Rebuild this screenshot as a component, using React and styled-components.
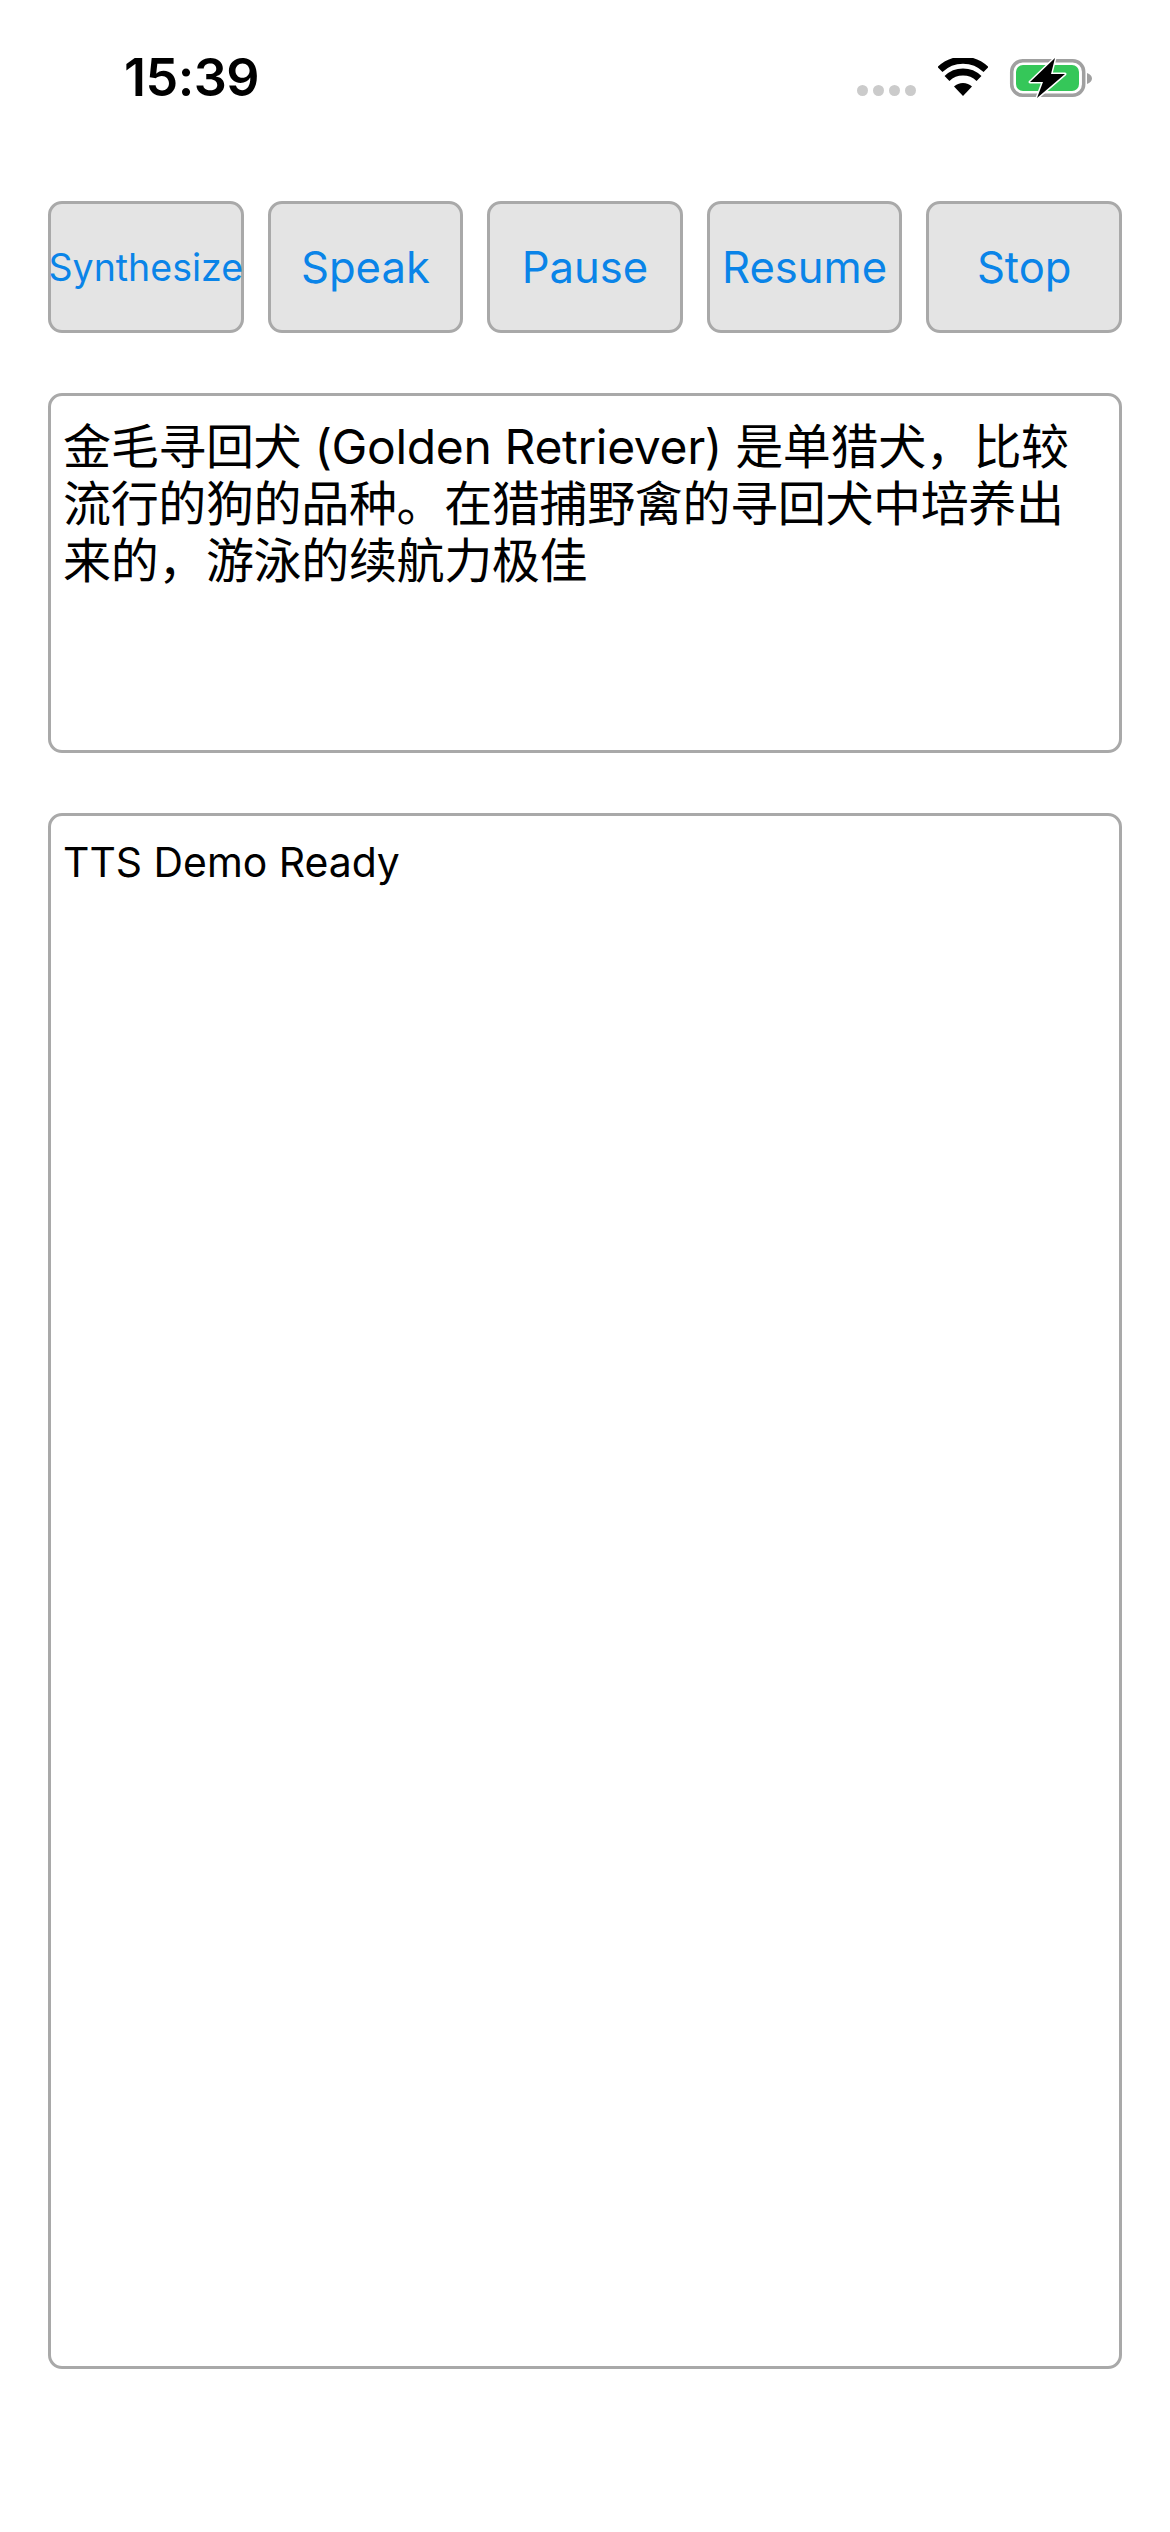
import styled, { createGlobalStyle } from "styled-components";

const GlobalStyle = createGlobalStyle`
  html, body {
    margin: 0;
    padding: 0;
    background: #fff;
  }
  body {
    font-family: Inter, "Noto Sans CJK SC", sans-serif;
  }
`;

const Screen = styled.div`
  width: 1170px;
  height: 2532px;
  box-sizing: border-box;
  display: flex;
  flex-direction: column;
  overflow: hidden;
`;

const StatusBar = styled.header`
  height: 201px;
  flex: none;
  box-sizing: border-box;
  padding: 45px 78px 0 124px;
  display: flex;
  align-items: flex-start;
  justify-content: space-between;
`;

const Time = styled.div`
  font-size: 52px;
  line-height: 66px;
  font-weight: 600;
  color: #000;
  letter-spacing: -0.5px;
`;

const StatusIcons = styled.div`
  display: flex;
  align-items: center;
  padding-top: 11px;
`;

const Dots = styled.div`
  display: flex;
  gap: 5px;
  align-self: flex-end;
  margin: 0 22px 4px 0;
`;

const Dot = styled.span`
  width: 11px;
  height: 11px;
  border-radius: 50%;
  background: #cbcbcb;
`;

const BatteryIcon = styled.svg`
  margin-left: 20px;
`;

const Content = styled.main`
  flex: 1;
  display: flex;
  flex-direction: column;
  gap: 60px;
  padding: 0 48px;
`;

const ButtonRow = styled.div`
  display: grid;
  grid-template-columns: repeat(5, minmax(0, 1fr));
  gap: 24px;
`;

const ActionButton = styled.button`
  height: 132px;
  padding: 0;
  box-sizing: border-box;
  display: flex;
  align-items: center;
  justify-content: center;
  border: 3px solid #a9a9a9;
  border-radius: 14px;
  background: #e4e4e4;
  color: #0a84e8;
  font-family: inherit;
  font-size: ${(p) => (p.$small ? "37.5px" : "43.6px")};
  white-space: nowrap;
`;

const TextBox = styled.div`
  box-sizing: border-box;
  height: ${(p) => p.$height}px;
  border: 3px solid #a9a9a9;
  border-radius: 14px;
  padding: ${(p) => p.$padTop}px 30px 0 12px;
  color: #000;
  font-size: ${(p) => p.$size}px;
  line-height: ${(p) => p.$lineHeight}px;
  letter-spacing: ${(p) => p.$spacing || 0}px;
`;

function Wifi() {
  return (
    <svg width="50" height="40" viewBox="0 0 50 40">
      <path d="M25 38 L16 28.5 A13 13 0 0 1 34 28.5 Z" fill="#000" />
      <path d="M9 20.5 A23 23 0 0 1 41 20.5" fill="none" stroke="#000" strokeWidth="7" />
      <path d="M2 11.5 A33 33 0 0 1 48 11.5" fill="none" stroke="#000" strokeWidth="7" />
    </svg>
  );
}

function Battery() {
  return (
    <BatteryIcon width="84" height="44" viewBox="0 0 84 44">
      <rect x="3.7" y="4.7" width="72" height="34.6" rx="11" fill="none" stroke="#a0a0a0" strokeWidth="3.5" />
      <rect x="8" y="9" width="63" height="26" rx="7" fill="#35c759" />
      <path d="M79 17 C82 18 84 20 84 22.5 C84 25 82 27 79 28 Z" fill="#a0a0a0" />
      <path
        d="M47 2 L22 26 H35 L29 42 L57 18 H43 Z"
        fill="#000"
        stroke="#fff"
        strokeWidth="3"
        strokeLinejoin="round"
        paintOrder="stroke"
      />
    </BatteryIcon>
  );
}

const buttons = ["Synthesize", "Speak", "Pause", "Resume", "Stop"];

export default function App() {
  return (
    <Screen>
      <GlobalStyle />
      <StatusBar>
        <Time>15:39</Time>
        <StatusIcons>
          <Dots>
            <Dot />
            <Dot />
            <Dot />
            <Dot />
          </Dots>
          <Wifi />
          <Battery />
        </StatusIcons>
      </StatusBar>
      <Content>
        <ButtonRow>
          {buttons.map((label) => (
            <ActionButton key={label} $small={label === "Synthesize"}>
              {label}
            </ActionButton>
          ))}
        </ButtonRow>
        <TextBox $height={360} $padTop={22} $size={48} $lineHeight={57} $spacing={-0.35}>
          金毛寻回犬 (Golden Retriever) 是单猎犬，比较流行的狗的品种。在猎捕野禽的寻回犬中培养出来的，游泳的续航力极佳
        </TextBox>
        <TextBox $height={1556} $padTop={21} $size={40.9} $lineHeight={50}>
          TTS Demo Ready
        </TextBox>
      </Content>
    </Screen>
  );
}
